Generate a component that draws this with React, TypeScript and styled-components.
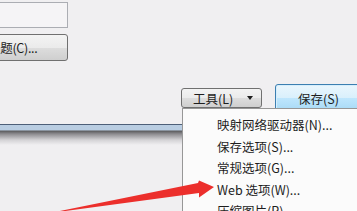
import styled, { createGlobalStyle } from 'styled-components';

const GlobalStyle = createGlobalStyle`
  html, body {
    margin: 0;
    padding: 0;
    background: #f0eff1;
    overflow: hidden;
  }
`;

const menuItems = ['映射网络驱动器(N)...', '保存选项(S)...', '常规选项(G)...', 'Web 选项(W)...', '压缩图片(P)...'];

export default function App() {
  return (
    <>
      <GlobalStyle />
      <Page>
        <TopBlock>
          <InputBox />
          <ThemeButton>主题(C)...</ThemeButton>
        </TopBlock>

        <ActionRow>
          <ToolsButton>
            <span>工具(L)</span>
            <Caret />
          </ToolsButton>
          <SaveButton>保存(S)</SaveButton>
        </ActionRow>

        <Separator />

        <Menu>
          {menuItems.map((item) => (
            <MenuItem key={item}>{item}</MenuItem>
          ))}
        </Menu>

        <Arrow width="357" height="211" viewBox="0 0 357 211">
          <polygon points="55,212 198,183 199,180.5 214,187 199,197.5 199,193 58,212" fill="#ec2f2c" />
        </Arrow>
      </Page>
    </>
  );
}

const Page = styled.div`
  position: relative;
  width: 357px;
  height: 211px;
  overflow: hidden;
  display: flex;
  flex-direction: column;
  font-family: 'Noto Sans CJK SC', 'Liberation Sans', sans-serif;
  color: #1e1e1e;
`;

const TopBlock = styled.div`
  display: flex;
  flex-direction: column;
  gap: 6px;
  padding-top: 2px;
  margin-left: -40px;
  width: 108px;
`;

const InputBox = styled.div`
  height: 24px;
  border: 1px solid #abadb3;
  background: #f5f4f6;
`;

const ThemeButton = styled.div`
  box-sizing: border-box;
  height: 27px;
  border: 1px solid #707070;
  border-radius: 3px;
  background: linear-gradient(#f3f3f3, #ebebeb 50%, #dddddd 51%, #cfcfcf);
  display: flex;
  align-items: center;
  padding-left: 27px;
  font-size: 12.5px;
  letter-spacing: -0.3px;
`;

const ActionRow = styled.div`
  display: flex;
  align-items: center;
  margin-top: 23px;
  padding-left: 181px;
  gap: 13px;
  height: 28px;
`;

const ToolsButton = styled.div`
  box-sizing: border-box;
  flex: none;
  width: 81px;
  height: 20px;
  border: 1px solid #707070;
  border-radius: 3px;
  background: linear-gradient(#f3f3f3, #ebebeb 50%, #dddddd 51%, #cfcfcf);
  display: flex;
  align-items: center;
  justify-content: space-between;
  padding: 0 8px 0 11px;
  font-size: 12.5px;
`;

const Caret = styled.span`
  width: 0;
  height: 0;
  border-left: 3.5px solid transparent;
  border-right: 3.5px solid transparent;
  border-top: 4px solid #1e1e1e;
`;

const SaveButton = styled.div`
  box-sizing: border-box;
  flex: none;
  width: 92px;
  height: 28px;
  border: 1px solid #3c7fb1;
  border-radius: 3px;
  box-shadow: inset 0 0 0 1px #d6eefc;
  background: linear-gradient(#eaf6fd, #d9f0fc 50%, #bee6fd 51%, #a7d9f5);
  display: flex;
  align-items: center;
  padding-left: 22px;
  font-size: 12.5px;
`;

const Separator = styled.div`
  margin-top: 12px;
  width: 182px;
  height: 20px;
  border-top: 1px solid #4d5f78;
  background: linear-gradient(
    #b9cde2 0px,
    #b9cde2 5px,
    #5c5c5e 6px,
    #8d8c90 9px,
    #d4d3d6 15px,
    #f0eff1 20px
  );
`;

const Menu = styled.div`
  position: absolute;
  left: 182px;
  top: 108px;
  width: 190px;
  height: 120px;
  background: #fbfbfb;
  border: 1px solid #979797;
  box-sizing: border-box;
  padding: 5px 0 0 34px;
  display: flex;
  flex-direction: column;
`;

const MenuItem = styled.div`
  height: 21.5px;
  line-height: 21.5px;
  font-size: 12.5px;
  white-space: nowrap;
`;

const Arrow = styled.svg`
  position: absolute;
  left: 0;
  top: 0;
  pointer-events: none;
`;
